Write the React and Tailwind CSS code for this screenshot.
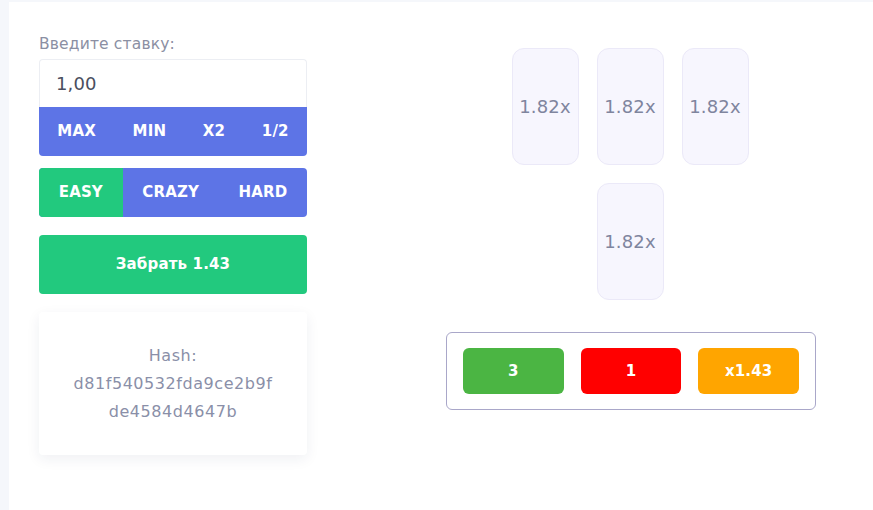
const amounts = ["MAX", "MIN", "X2", "1/2"];
const modes = ["EASY", "CRAZY", "HARD"];

function Card({ value }) {
  return (
    <div className="w-[67px] h-[117px] rounded-[12px] bg-[#f7f6fe] border border-[#ebe9f8] flex items-center justify-center text-[18px] text-[#7f859e]">
      {value}
    </div>
  );
}

export default function App() {
  const mode = "EASY";

  return (
    <div
      className="bg-[#f5f7fb] pl-[9px] pt-[2px] h-[510px] w-[873px] overflow-hidden tracking-[0.01em]"
      style={{ fontFamily: '"DejaVu Sans", "Open Sans", sans-serif' }}
    >
      <div className="bg-white h-full flex">
        {/* left side: bet controls */}
        <div className="w-[268px] ml-[30px] pt-[32px] flex flex-col">
          <div className="text-[15.5px] leading-[20px] text-[#8b8fa3] mb-[5px]">Введите ставку:</div>
          <div className="h-[48px] border border-b-0 border-[#eceef3] rounded-t-[4px] flex items-center px-[16px] text-[18px] text-[#4a4e5e]">
            1,00
          </div>
          <div className="h-[49px] bg-[#5d74e6] rounded-b-[4px] flex items-center justify-around text-white font-semibold text-[15px]">
            {amounts.map((a) => (
              <span key={a}>{a}</span>
            ))}
          </div>

          <div className="mt-[12px] h-[49px] bg-[#5d74e6] rounded-[4px] overflow-hidden flex text-white font-semibold text-[15px]">
            {modes.map((m) => (
              <div
                key={m}
                className={
                  "flex-auto flex items-center justify-center " + (m === mode ? "bg-[#22c97e]" : "")
                }
              >
                {m}
              </div>
            ))}
          </div>

          <button className="mt-[18px] h-[59px] bg-[#22c97e] rounded-[4px] text-white font-semibold text-[15px]">
            Забрать 1.43
          </button>

          <div className="mt-[18px] h-[143px] rounded-[4px] bg-white shadow-[0_4px_14px_rgba(30,40,90,0.07)] flex flex-col items-center justify-center text-[16px] leading-[28px] tracking-[0.035em] text-[#8a8fa8]">
            <div>Hash:</div>
            <div>d81f540532fda9ce2b9f</div>
            <div>de4584d4647b</div>
          </div>
        </div>

        {/* right side: cards and result */}
        <div className="flex-1 ml-[80px] pt-[46px] flex flex-col items-center">
          <div className="flex gap-[18px]">
            <Card value="1.82x" />
            <Card value="1.82x" />
            <Card value="1.82x" />
          </div>
          <div className="mt-[18px]">
            <Card value="1.82x" />
          </div>

          <div className="mt-[32px] ml-[2px] w-[370px] h-[78px] border border-[#a9a7c9] rounded-[6px] flex items-center gap-[17px] pl-[16px] pr-[16px] text-white font-semibold text-[15px]">
            <div className="flex-1 h-[46px] rounded-[6px] bg-[#4bb543] flex items-center justify-center">3</div>
            <div className="flex-1 h-[46px] rounded-[6px] bg-[#ff0000] flex items-center justify-center">1</div>
            <div className="flex-1 h-[46px] rounded-[6px] bg-[#ffa500] flex items-center justify-center">x1.43</div>
          </div>
        </div>
      </div>
    </div>
  );
}
